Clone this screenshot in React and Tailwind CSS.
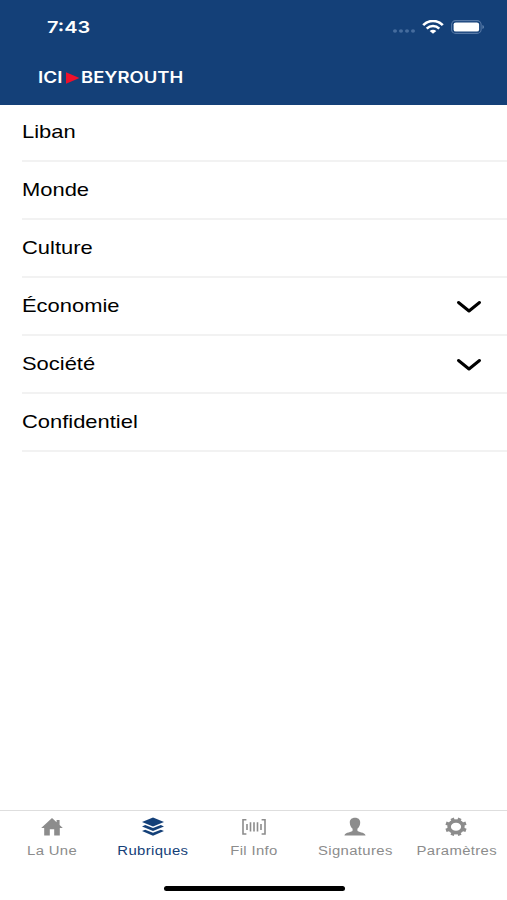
import clsx from 'clsx'

const sections = [
  { label: 'Liban' },
  { label: 'Monde' },
  { label: 'Culture' },
  { label: 'Économie', expandable: true },
  { label: 'Société', expandable: true },
  { label: 'Confidentiel' },
]

function HomeIcon() {
  return (
    <svg viewBox="0 0 24 20" className="h-5 w-6" fill="currentColor">
      <path d="M12 1 L1.2 11 H4.2 V18.5 H9.8 V12.3 H14.2 V18.5 H19.8 V11 H22.8 L19.6 8 V3 H16.6 V5.2 Z" />
    </svg>
  )
}

function LayersIcon() {
  return (
    <svg viewBox="0 0 24 20" className="h-5 w-6" fill="currentColor">
      <path d="M12 0.6 L23 5 L12 9.4 L1 5 Z" />
      <path d="M1 9.4 L4.2 8 L12 11.1 L19.8 8 L23 9.4 L12 14 Z" />
      <path d="M1 14.1 L4.2 12.7 L12 15.8 L19.8 12.7 L23 14.1 L12 18.8 Z" />
    </svg>
  )
}

function BarcodeIcon() {
  return (
    <svg viewBox="0 0 24 20" className="h-5 w-6" fill="none" stroke="currentColor" strokeWidth="1.6">
      <path d="M4.4 2.8 H1 V17 H4.4 M19.6 2.8 H23 V17 H19.6" />
      <path d="M5 7 V13 M8.5 5.2 V14.6 M12 5.2 V14.6 M15.5 5.2 V14.6 M19 7 V13" />
    </svg>
  )
}

function PersonIcon() {
  return (
    <svg viewBox="0 0 24 20" className="h-5 w-6" fill="currentColor">
      <path d="M12 0.8 C8.4 0.8 6.6 3 6.8 5.7 C6.9 8.5 8.1 10.5 9.6 11.8 V13.6 C9.2 15.6 2.2 15 1.4 18.5 H22.6 C21.8 15 14.8 15.6 14.4 13.6 V11.8 C15.9 10.5 17.1 8.5 17.2 5.7 C17.4 3 15.6 0.8 12 0.8 Z" />
    </svg>
  )
}

function GearIcon() {
  return (
    <svg viewBox="0 0 24 20" className="h-5 w-6" fill="none" stroke="currentColor">
      <ellipse cx="12" cy="9.8" rx="6.9" ry="5.8" strokeWidth="3.6" />
      <path
        d="M9.4 4.2 L8.1 1.2 M14.6 4.2 L15.9 1.2 M18 7.6 L22 6.2 M18 12 L22 13.4 M14.6 15.4 L15.9 18.4 M9.4 15.4 L8.1 18.4 M6 12 L2 13.4 M6 7.6 L2 6.2"
        strokeWidth="3.5"
      />
    </svg>
  )
}

const tabs = [
  { label: 'La Une', icon: HomeIcon },
  { label: 'Rubriques', icon: LayersIcon, active: true },
  { label: 'Fil Info', icon: BarcodeIcon },
  { label: 'Signatures', icon: PersonIcon },
  { label: 'Paramètres', icon: GearIcon },
]

function StatusBar() {
  return (
    <div className="flex h-[54px] items-center justify-between pr-[22px] pl-[47px]">
      <span className="origin-left scale-x-[1.21] font-['Inter',sans-serif] text-[16.5px] leading-5 font-semibold">
        7:43
      </span>
      <div className="flex items-center">
        <svg viewBox="0 0 24 6" className="mt-2 h-1.5 w-6 text-[#466c9e]" fill="currentColor">
          <ellipse cx="3" cy="3" rx="2" ry="1.7" />
          <ellipse cx="9" cy="3" rx="2" ry="1.7" />
          <ellipse cx="15" cy="3" rx="2" ry="1.7" />
          <ellipse cx="21" cy="3" rx="2" ry="1.7" />
        </svg>
        <svg viewBox="0 0 22 14" className="ml-1.5 h-3.5 w-[22px]" fill="none" stroke="currentColor">
          <path d="M1.2 5.2 C6.5 -0.4 15.5 -0.4 20.8 5.2" strokeWidth="2.6" />
          <path d="M4.7 8.6 C8.2 5.1 13.8 5.1 17.3 8.6" strokeWidth="2.5" />
          <path d="M7.7 11 C9.5 9.3 12.5 9.3 14.3 11 L11 13.8 Z" fill="currentColor" stroke="none" />
        </svg>
        <svg viewBox="0 0 34 14" className="ml-[7px] h-3.5 w-[34px]" fill="none">
          <rect x="0.6" y="0.6" width="29.5" height="12.8" rx="4" stroke="#5779a7" strokeWidth="1.1" />
          <rect x="2.6" y="2.4" width="25.5" height="9.2" rx="2.2" fill="white" />
          <path d="M31.5 5 C33.3 5.6 33.3 8.4 31.5 9 Z" fill="#6f8fb8" />
        </svg>
      </div>
    </div>
  )
}

function Logo() {
  return (
    <div className="flex h-[47px] items-center pl-[38px] font-['Inter',sans-serif] text-[15.5px] leading-5 font-semibold">
      <span className="w-7 origin-left scale-x-[1.22]">ICI</span>
      <svg viewBox="0 0 14 12" className="h-3 w-3.5 fill-[#f0102b]">
        <path d="M0 0.3 L13.5 6 L0 11.7 Z" />
      </svg>
      <span className="ml-px origin-left scale-x-[1.19]">BEYROUTH</span>
    </div>
  )
}

function SectionRow({ label, expandable }) {
  return (
    <li className="flex h-[58px] items-center justify-between border-b-2 border-[#f2f2f2] pr-[25px]">
      <span className="origin-left scale-x-[1.185] text-[18.5px] leading-6">{label}</span>
      {expandable && (
        <svg viewBox="0 0 26 14" className="mt-px h-3.5 w-[26px]" fill="none" stroke="currentColor" strokeWidth="3" strokeLinecap="round" strokeLinejoin="round">
          <path d="M2.5 2.5 L13 11 L23.5 2.5" />
        </svg>
      )}
    </li>
  )
}

export default function App() {
  return (
    <div className="flex h-[900px] w-[507px] flex-col overflow-hidden bg-white font-['Liberation_Sans',sans-serif] text-black">
      <header className="h-[105px] shrink-0 bg-[#144078] text-white">
        <StatusBar />
        <Logo />
      </header>

      <ul className="-mt-px flex-1 pl-[22px]">
        {sections.map((section) => (
          <SectionRow key={section.label} {...section} />
        ))}
      </ul>

      <nav className="flex h-[90px] shrink-0 flex-col items-center border-t border-[#dedede]">
        <div className="grid w-full grid-cols-5 pt-1.5 pl-px">
          {tabs.map(({ label, icon: Icon, active }) => (
            <div
              key={label}
              className={clsx('flex flex-col items-center', active ? 'text-[#144078]' : 'text-[#8c8c8c]')}
            >
              <Icon />
              <span className="mt-1.5 scale-x-[1.19] text-[12.5px] leading-4 tracking-[0.3px] whitespace-nowrap">
                {label}
              </span>
            </div>
          ))}
        </div>
        <div className="mt-[27px] ml-0.5 h-[5px] w-[181px] rounded-full bg-black" />
      </nav>
    </div>
  )
}
